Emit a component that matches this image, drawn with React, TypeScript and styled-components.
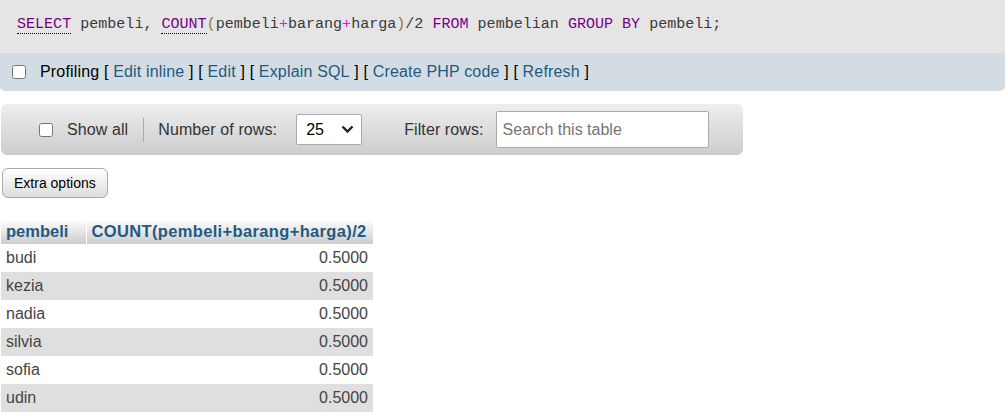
import React from "react";
import styled, { createGlobalStyle } from "styled-components";

const Global = createGlobalStyle`
  html, body { margin: 0; padding: 0; background: #fff; }
  body { font-family: "Liberation Sans", Arial, sans-serif; font-size: 16px; color: #444; }
`;

const Page = styled.div`
  width: 1005px;
  display: flex;
  flex-direction: column;
  align-items: flex-start;
`;

const SqlBlock = styled.div`
  align-self: stretch;
  height: 53px;
  box-sizing: border-box;
  padding: 15px 17px 0;
  background: #e5e5e5;
  font-family: "Liberation Mono", "DejaVu Sans Mono", monospace;
  font-size: 15.05px;
  line-height: 18px;
  color: #3a3a3a;
  white-space: pre;
`;

const Kw = styled.span<{ $link?: boolean }>`
  color: #770088;
  ${(p) => (p.$link ? "border-bottom: 1px dotted #000;" : "")}
`;
const Op = styled.span`
  color: #ff00ff;
`;
const Br = styled.span`
  color: #997744;
`;

const ProfilingBar = styled.div`
  align-self: stretch;
  height: 38px;
  box-sizing: border-box;
  background: #d3dce3;
  border-radius: 0 0 5px 5px;
  display: flex;
  align-items: center;
  padding-left: 12px;
  font-size: 16px;
  letter-spacing: 0.17px;
  color: #000;
`;

const Check = styled.input.attrs({ type: "checkbox" })<{ $gap: number }>`
  width: 14px;
  height: 14px;
  margin: 0 ${(p) => p.$gap}px 0 0;
`;

const Link = styled.a`
  color: #235a81;
  text-decoration: none;
`;

const NavBar = styled.div`
  margin: 13px 0 0 1px;
  width: 742px;
  height: 51px;
  box-sizing: border-box;
  border-radius: 6px;
  background: linear-gradient(#eeeeee, #cccccc);
  display: flex;
  align-items: center;
  padding-left: 38px;
  font-size: 16px;
  letter-spacing: 0.1px;
  color: #333;
`;

const Sep = styled.span`
  width: 1px;
  height: 24px;
  background: #aaa;
  margin: 0 14px 0 15px;
`;

const SelectWrap = styled.div`
  position: relative;
  margin-left: 19px;
  width: 66px;
  height: 31px;
  box-sizing: border-box;
  border: 1px solid #aaa;
  border-radius: 2px;
  background: #fff;
`;

const Select = styled.select`
  appearance: none;
  width: 100%;
  height: 100%;
  border: none;
  background: transparent;
  font-family: "Liberation Sans", Arial, sans-serif;
  font-size: 16px;
  color: #000;
  padding: 0 0 0 9px;
  outline: none;
`;

const Chevron = styled.svg`
  position: absolute;
  right: 7px;
  top: 10px;
  pointer-events: none;
`;

const FilterLabel = styled.span`
  margin-left: 42px;
`;

const SearchInput = styled.input`
  margin-left: 12px;
  width: 213px;
  height: 37px;
  box-sizing: border-box;
  border: 1px solid #aaa;
  border-radius: 2px;
  padding: 0 6px;
  font-family: "Liberation Sans", Arial, sans-serif;
  font-size: 16px;
  color: #000;
  &::placeholder { color: #757575; }
`;

const ExtraButton = styled.button`
  margin: 13px 0 0 2px;
  height: 30px;
  padding: 0 11px;
  border: 1px solid #aaa;
  border-radius: 6px;
  background: linear-gradient(#ffffff, #dddddd);
  font-family: "Liberation Sans", Arial, sans-serif;
  font-size: 14px;
  color: #000;
`;

const Table = styled.table`
  margin: 21px 0 0 1px;
  border-collapse: collapse;
  font-size: 16px;
`;

const Th = styled.th<{ $w: number; $spacing?: number }>`
  width: ${(p) => p.$w}px;
  height: 25px;
  box-sizing: border-box;
  padding: 0 5px;
  text-align: left;
  font-weight: bold;
  font-size: 16.5px;
  letter-spacing: ${(p) => p.$spacing ?? 0}px;
  color: #235a81;
  background: linear-gradient(#ffffff, #cccccc);
  border-right: 1px solid #fff;
  &:last-child { border-right: none; }
`;

const Tr = styled.tr<{ $alt: boolean }>`
  background: ${(p) => (p.$alt ? "#dfdfdf" : "#fff")};
`;

const Td = styled.td<{ $right?: boolean }>`
  height: 28px;
  box-sizing: border-box;
  padding: 0 5px;
  color: #444;
  text-align: ${(p) => (p.$right ? "right" : "left")};
`;

const rows = ["budi", "kezia", "nadia", "silvia", "sofia", "udin"];

export default function App() {
  return (
    <Page>
      <Global />
      <SqlBlock>
        <Kw $link>SELECT</Kw> pembeli, <Kw $link>COUNT</Kw>
        <Br>(</Br>pembeli<Op>+</Op>barang<Op>+</Op>harga<Br>)</Br>/2 <Kw>FROM</Kw> pembelian{" "}
        <Kw>GROUP BY</Kw> pembeli;
      </SqlBlock>
      <ProfilingBar>
        <Check $gap={14} />
        Profiling&nbsp;[&nbsp;<Link>Edit inline</Link>&nbsp;]&nbsp;[&nbsp;<Link>Edit</Link>&nbsp;]&nbsp;[&nbsp;
        <Link>Explain SQL</Link>&nbsp;]&nbsp;[&nbsp;<Link>Create PHP code</Link>&nbsp;]&nbsp;[&nbsp;
        <Link>Refresh</Link>&nbsp;]
      </ProfilingBar>
      <NavBar>
        <Check $gap={14} />
        <span>Show all</span>
        <Sep />
        <span>Number of rows:</span>
        <SelectWrap>
          <Select defaultValue="25">
            <option>25</option>
            <option>50</option>
            <option>100</option>
          </Select>
          <Chevron width="13" height="9" viewBox="0 0 13 9">
            <path d="M1.5 1.5 L6.5 6.5 L11.5 1.5" fill="none" stroke="#222" strokeWidth="2.4" />
          </Chevron>
        </SelectWrap>
        <FilterLabel>Filter rows:</FilterLabel>
        <SearchInput placeholder="Search this table" />
      </NavBar>
      <ExtraButton>Extra options</ExtraButton>
      <Table>
        <thead>
          <tr>
            <Th $w={85}>pembeli</Th>
            <Th $w={287} $spacing={0.35}>
              COUNT(pembeli+barang+harga)/2
            </Th>
          </tr>
        </thead>
        <tbody>
          {rows.map((r, i) => (
            <Tr key={r} $alt={i % 2 === 1}>
              <Td>{r}</Td>
              <Td $right>0.5000</Td>
            </Tr>
          ))}
        </tbody>
      </Table>
    </Page>
  );
}
